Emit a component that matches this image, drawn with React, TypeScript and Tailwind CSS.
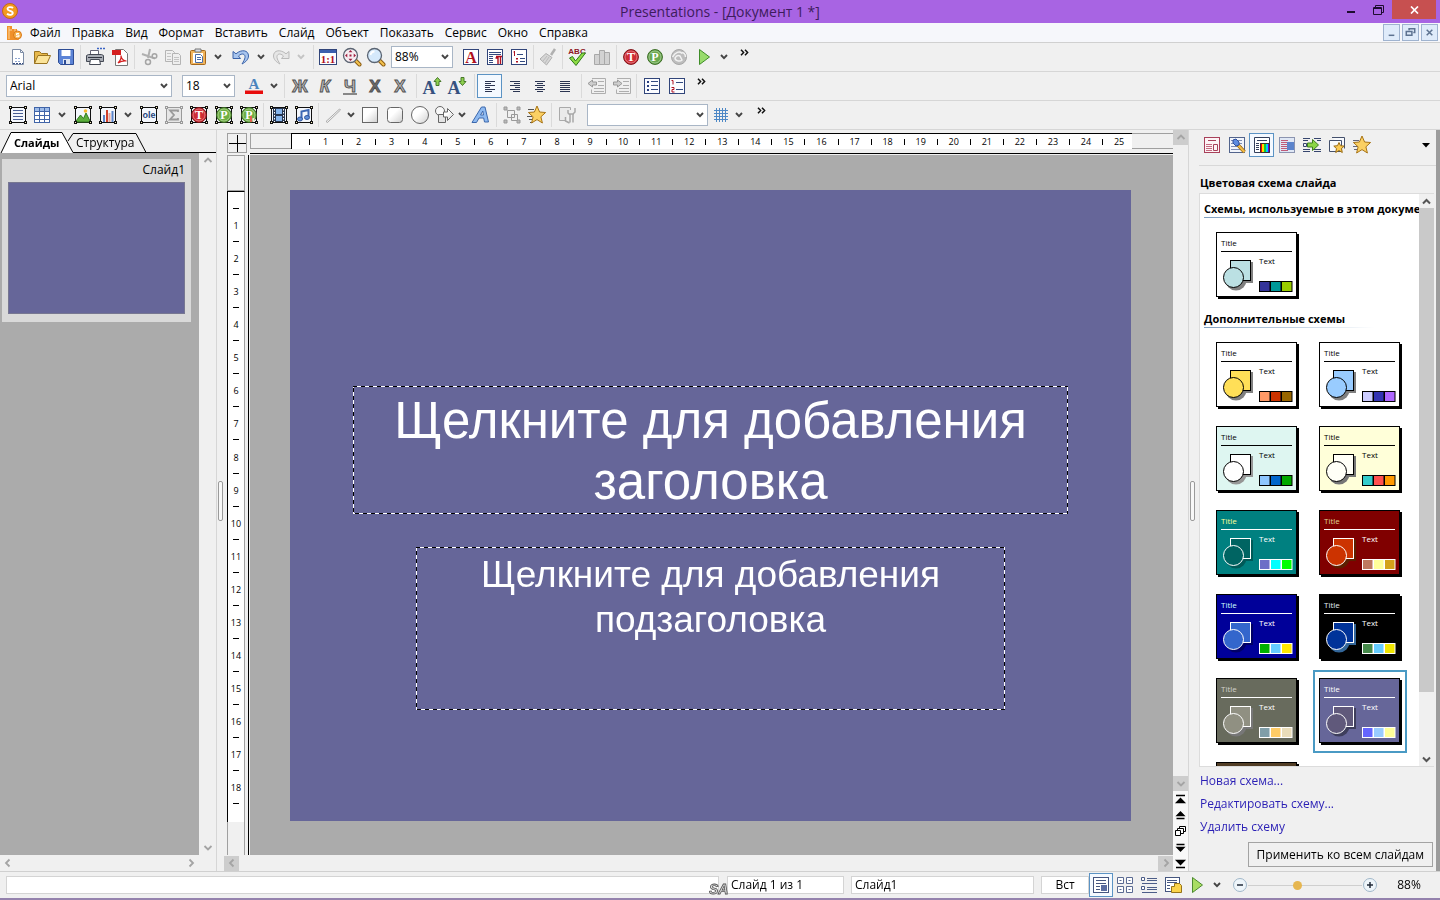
import { useState } from "react";
import type { ReactNode } from "react";
import clsx from "clsx";

interface Scheme {
  name: string;
  bg: string;
  line: string;
  title: string;
  fill: string;
  shadow: string;
  swatches: [string, string, string];
}

const usedScheme: Scheme = {
  name: "used",
  bg: "#ffffff",
  line: "#000000",
  title: "#000000",
  fill: "#bbe0e3",
  shadow: "#808080",
  swatches: ["#333399", "#009999", "#99cc00"],
};

const schemes: Scheme[] = [
  { name: "yellow", bg: "#ffffff", line: "#000000", title: "#000000", fill: "#ffdf57", shadow: "#808080", swatches: ["#ff9966", "#cc3300", "#996600"] },
  { name: "sky", bg: "#ffffff", line: "#000000", title: "#000000", fill: "#99ccff", shadow: "#808080", swatches: ["#ccccff", "#3333b2", "#af67ff"] },
  { name: "mint", bg: "#def6f1", line: "#000000", title: "#000000", fill: "#ffffff", shadow: "#969696", swatches: ["#8dc6ff", "#0066cc", "#00a800"] },
  { name: "cream", bg: "#ffffd9", line: "#000000", title: "#000000", fill: "#fffff7", shadow: "#777777", swatches: ["#33cccc", "#ff5050", "#ff9900"] },
  { name: "teal", bg: "#008080", line: "#ffffff", title: "#ffff99", fill: "#006462", shadow: "#005a58", swatches: ["#6d6fc7", "#00ffff", "#00ff00"] },
  { name: "maroon", bg: "#800000", line: "#ffffff", title: "#dfd293", fill: "#cc3300", shadow: "#5c1f00", swatches: ["#be7960", "#ffff99", "#d3a219"] },
  { name: "navy", bg: "#000099", line: "#ffffff", title: "#ccffff", fill: "#3366cc", shadow: "#000066", swatches: ["#00b000", "#66ccff", "#ffe701"] },
  { name: "black", bg: "#000000", line: "#ffffff", title: "#e3ebf1", fill: "#003399", shadow: "#336699", swatches: ["#468a4b", "#66ccff", "#f0e500"] },
  { name: "olive", bg: "#686b5d", line: "#ffffff", title: "#d1d1cb", fill: "#909082", shadow: "#777777", swatches: ["#809ea8", "#ffcc66", "#e9dcb9"] },
  { name: "violet", bg: "#666699", line: "#ffffff", title: "#ffffff", fill: "#60597b", shadow: "#3e3e5c", swatches: ["#6666ff", "#99ccff", "#ffff99"] },
  { name: "brown", bg: "#523e26", line: "#ffffff", title: "#dfc08d", fill: "#8c7b70", shadow: "#2d2015", swatches: ["#8f5f2f", "#cc9966", "#e0c9a0"] },
];

const menus = ["Файл", "Правка", "Вид", "Формат", "Вставить", "Слайд", "Объект", "Показать", "Сервис", "Окно", "Справка"];

/* ---------- drawing helpers ---------- */

function Ico({ children, size = 20 }: { children: ReactNode; size?: number }) {
  return (
    <svg width={size} height={size} viewBox={`0 0 ${size} ${size}`} fill="none" className="shrink-0" aria-hidden="true">
      {children}
    </svg>
  );
}

function Framed({ children, muted = false }: { children?: ReactNode; muted?: boolean }) {
  const c = muted ? "#9a9a9a" : "#111";
  return (
    <Ico>
      <rect x="2.500" y="2.500" width="15" height="15" fill={muted ? "#e6e6e6" : "#f4f7fc"} stroke={c} />
      {children}
      {[1, 16].map((x) =>
        [1, 16].map((y) => (
          <rect key={`${x}-${y}`} x={x + 0.5} y={y + 0.5} width="2" height="2" fill={muted ? "#eee" : "#fff3c4"} stroke={c} />
        )),
      )}
    </Ico>
  );
}

function Lines({ x = 4, w = 12, ys, color = "#334a80" }: { x?: number; w?: number; ys: number[]; color?: string }) {
  return (
    <>
      {ys.map((y) => (
        <path key={y} d={`M${x} ${y + 0.5}h${w}`} stroke={color} />
      ))}
    </>
  );
}

function Disc({ color, dark, letter }: { color: string; dark: string; letter: string }) {
  return (
    <>
      <circle cx="10" cy="10" r="7.400" fill={color} stroke={dark} />
      <circle cx="10" cy="10" r="6" stroke="#fff" strokeOpacity="0.350" />
      <text x="10" y="14" textAnchor="middle" fontSize="12" fontWeight="700" fill="#fff" fontFamily="Liberation Serif, serif">
        {letter}
      </text>
    </>
  );
}

const starPath = "M10 1l2.600 6 6 .5-4.700 4.300 1.500 6.200-5.400-3.400-5.400 3.400 1.500-6.200L1.400 7.500l6-.5z";

function Chevron({ muted = false }: { muted?: boolean }) {
  return (
    <svg width="8" height="6" viewBox="0 0 8 6" fill="none" className="shrink-0" aria-hidden="true">
      <path d="M1 1l3 3.200L7 1" stroke={muted ? "#c4c4c4" : "#444"} strokeWidth="1.900" />
    </svg>
  );
}

/* ---------- toolbar controls ---------- */

function Tool({ label, children, active = false, wide = false }: { label: string; children: ReactNode; active?: boolean; wide?: boolean }) {
  return (
    <button
      type="button"
      aria-label={label}
      className={clsx(
        "flex h-6 shrink-0 items-center justify-center",
        wide ? "w-[25px]" : "w-6",
        active && "border border-[#5b93c4] bg-[#f4f9ff]",
      )}
    >
      {children}
    </button>
  );
}

function Drop({ label, muted = false, narrow = false }: { label: string; muted?: boolean; narrow?: boolean }) {
  return (
    <button type="button" aria-label={label} className={clsx("flex h-6 shrink-0 items-center justify-center", narrow ? "w-3" : "w-4")}>
      <Chevron muted={muted} />
    </button>
  );
}

function Sep() {
  return <span className="mx-[2px] h-6 w-px shrink-0 bg-[#dadada]" />;
}

function More() {
  return (
    <button type="button" aria-label="Ещё" className="mb-[9px] ml-1 flex w-4 shrink-0 items-center justify-center">
      <svg width="9" height="7" viewBox="0 0 9 7" fill="none" aria-hidden="true">
        <path d="M1 .8l2.600 2.700L1 6.200M5 .8l2.600 2.700L5 6.200" stroke="#111" strokeWidth="1.500" />
      </svg>
    </button>
  );
}

function Combo({ label, options, className }: { label: string; options: string[]; className: string }) {
  return (
    <div className={clsx("relative h-[22px] shrink-0", className)}>
      <select
        aria-label={label}
        className="h-full w-full appearance-none rounded-none border border-[#a9b6c6] bg-white pl-[3px] pr-4 text-xs text-black outline-none"
      >
        {options.map((o) => (
          <option key={o}>{o}</option>
        ))}
      </select>
      <span className="pointer-events-none absolute inset-y-0 right-1 flex items-center">
        <Chevron />
      </span>
    </div>
  );
}

function Bar({ children }: { children: ReactNode }) {
  return <div className="flex h-[29px] shrink-0 items-center border-b border-[#d6d6d6] pl-[6px]">{children}</div>;
}

function FancyLetter({ ch, italic = false, underline = false, fill = "#b5b5b5" }: { ch: string; italic?: boolean; underline?: boolean; fill?: string }) {
  return (
    <Ico>
      <text x="10" y="15.500" textAnchor="middle" fontSize="17" fontWeight="700" fontStyle={italic ? "italic" : "normal"} fill={fill} stroke="#505050" strokeWidth="0.900" fontFamily="Liberation Sans, sans-serif">
        {ch}
      </text>
      {underline && <path d="M3 18h14" stroke="#666" strokeWidth="1.500" />}
    </Ico>
  );
}

function Magnifier({ fit = false }: { fit?: boolean }) {
  return (
    <Ico>
      <path d="M13 13l4.500 4.500" stroke="#8a5a10" strokeWidth="4" strokeLinecap="round" />
      <path d="M13 13l4.500 4.500" stroke="#f2c14e" strokeWidth="2.200" strokeLinecap="round" />
      <circle cx="8.500" cy="8.500" r="7" fill={fit ? "#f7eef2" : "#d5e9fb"} stroke="#5a6472" strokeWidth="1.300" />
      {fit ? (
        <path d="M8.500 3l2 2.300h-4zM8.500 14l2-2.300h-4zM3 8.500l2.300-2v4zM14 8.500l-2.300-2v4zM7.500 7.500h2v2h-2z" fill="#a02040" />
      ) : (
        <path d="M4.500 8c.5-2.500 2-3.500 4-3.500" stroke="#fff" strokeWidth="1.800" />
      )}
    </Ico>
  );
}

function StandardBar() {
  return (
    <Bar>
      <Tool label="Создать">
        <Ico>
          <path d="M4.500 2.500h8l3 3v12h-11z" fill="#fff" stroke="#7d8ca5" />
          <path d="M12.500 2.500v3h3" stroke="#7d8ca5" />
          <path d="M7 14.500h6M7 11.500h6" stroke="#8fa6d0" strokeDasharray="2 1" />
          <path d="M5 16.500h10" stroke="#334a80" strokeDasharray="2 1" />
        </Ico>
      </Tool>
      <Tool label="Открыть">
        <Ico>
          <path d="M2.500 16.500v-12h5l2 2h6v3" fill="#e7b84b" stroke="#9a7421" />
          <path d="M2.500 16.500l3.500-8h12.500l-3.500 8z" fill="#fbe49a" stroke="#9a7421" />
        </Ico>
      </Tool>
      <Tool label="Сохранить">
        <Ico>
          <path d="M2.500 2.500h15v15h-13l-2-2z" fill="#5b83d6" stroke="#2d4c94" />
          <path d="M5.500 3h9v6h-9z" fill="#fff" />
          <path d="M7 12h7v5H7z" fill="#dfe6f2" />
          <path d="M8 13h2v4H8z" fill="#2d4c94" />
        </Ico>
      </Tool>
      <Sep />
      <Tool label="Печать">
        <Ico>
          <path d="M5.500 8V3.500h8V8" fill="#fff" stroke="#667" />
          <path d="M1.500 8.500l2-1h13l2 1v6h-17z" fill="#a9adb5" stroke="#454a55" />
          <path d="M5.500 12.500h9l1 5h-11z" fill="#fff" stroke="#454a55" />
          <path d="M3 10.500h14" stroke="#303540" />
          <path d="M12 1.500h2M15 1.500h2M18 1.500h2" stroke="#3b63c4" strokeWidth="1.500" />
        </Ico>
      </Tool>
      <Tool label="PDF" wide>
        <Ico>
          <path d="M5.500 2.500h8l4 4v12h-12z" fill="#fff" stroke="#777" />
          <path d="M2 3h9v5H2z" fill="#d42020" />
          <path d="M8 16c3-3 3.500-5 3-7.500 0 3 2.500 5.500 5.500 5.500-3-.5-6 .5-8.500 2z" stroke="#d42020" strokeWidth="1.200" />
        </Ico>
      </Tool>
      <Sep />
      <Tool label="Вырезать">
        <Ico>
          <path d="M11 2l-2 9M3 7l13 4.500" stroke="#b0b0b0" strokeWidth="2" />
          <circle cx="9" cy="15" r="2.500" stroke="#a5a5a5" strokeWidth="1.500" />
          <circle cx="15.500" cy="9" r="2.300" stroke="#a5a5a5" strokeWidth="1.500" />
        </Ico>
      </Tool>
      <Tool label="Копировать">
        <Ico>
          <path d="M2.500 3.500h7l2 2v9h-9z" fill="#efefef" stroke="#b4b4b4" />
          <path d="M9.500 6.500h6l2 2v9h-8z" fill="#efefef" stroke="#b4b4b4" />
          <Lines x={4} w={4} ys={[6, 9, 12]} color="#c4c4c4" />
          <Lines x={11} w={5} ys={[10, 12, 14]} color="#c4c4c4" />
        </Ico>
      </Tool>
      <Tool label="Вставить" wide>
        <Ico>
          <rect x="2.500" y="3.500" width="15" height="14" rx="1" fill="#f0b45c" stroke="#a5681c" />
          <path d="M5 6h10v10H5z" fill="#fff" />
          <path d="M7 2h6v3H7z" fill="#d8dde6" stroke="#777" />
          <path d="M7.500 7.500h5l2 2v6h-7z" fill="#fff" stroke="#4a6da8" />
          <Lines x={9} w={4} ys={[10, 12]} color="#4a6da8" />
        </Ico>
      </Tool>
      <Drop label="Варианты вставки" />
      <span className="w-[2px]" />
      <Tool label="Отменить" wide>
        <Ico>
          <path d="M2 4.500v7h7.500L7.500 9C11 5.500 14.500 7 14 10.500c-.3 2-1.500 4-3 6.500 4-2 6.500-5 6.500-8C17.500 3 10.500 2 5 6.800z" fill="#a8c5ee" stroke="#3a62a8" />
        </Ico>
      </Tool>
      <Drop label="Список отмен" />
      <Tool label="Вернуть">
        <Ico>
          <path d="M18 4.500v7h-7.500L12.500 9C9 5.500 5.500 7 6 10.500c.3 2 1.500 4 3 6.500-4-2-6.500-5-6.500-8C2.500 3 9.500 2 15 6.800z" fill="#e6e6e6" stroke="#b9b9b9" />
        </Ico>
      </Tool>
      <Drop label="Список возвратов" muted />
      <span className="w-[2px]" />
      <Sep />
      <Tool label="Масштаб 1:1">
        <Ico>
          <rect x="1.500" y="2.500" width="17" height="15" fill="#fff" stroke="#31457a" />
          <path d="M2 3h16v3H2z" fill="#3c5fae" />
          <text x="10" y="16" textAnchor="middle" fontSize="11" fontWeight="700" fill="#b01020" fontFamily="Liberation Serif, serif">
            1:1
          </text>
        </Ico>
      </Tool>
      <Tool label="По размеру окна">
        <Magnifier fit />
      </Tool>
      <Tool label="Масштаб">
        <Magnifier />
      </Tool>
      <Combo label="Масштаб" options={["88%", "100%", "150%"]} className="ml-[3px] mr-[6px] w-[62px]" />
      <Tool label="Шрифт">
        <Ico>
          <rect x="2.500" y="2.500" width="15" height="15" fill="#fff" stroke="#31457a" />
          <text x="10" y="15.500" textAnchor="middle" fontSize="16" fontWeight="700" fill="#b01020" fontFamily="Liberation Serif, serif">
            A
          </text>
        </Ico>
      </Tool>
      <Tool label="Абзац">
        <Ico>
          <rect x="2.500" y="2.500" width="15" height="15" fill="#fff" stroke="#31457a" />
          <Lines x={4} w={12} ys={[5, 7]} />
          <Lines x={4} w={4} ys={[9, 11, 13, 15]} />
          <path d="M11 9.500h6M13 9v8M15.500 9v8M10.500 11h2.500" stroke="#b01020" strokeWidth="1.400" />
        </Ico>
      </Tool>
      <Tool label="Список">
        <Ico>
          <rect x="2.500" y="2.500" width="15" height="15" fill="#fff" stroke="#31457a" />
          <path d="M5.500 4v5M4.500 5h1" stroke="#b01020" />
          <path d="M8 7.500h6M11 11.500h5M11 14.500h5" stroke="#334a80" />
          <path d="M7 11h2v1.500H7zM7 14h2v1.500H7z" fill="#b01020" />
        </Ico>
      </Tool>
      <Sep />
      <Tool label="Кисть">
        <Ico>
          <path d="M17 2l-4 6" stroke="#b0b0b0" strokeWidth="2.500" />
          <path d="M8 6.500l6 4-5.500 7.500L2 12z" fill="#d6d6d6" stroke="#b0b0b0" />
          <path d="M5 14l4-5M7 16l4-6" stroke="#bbb" />
        </Ico>
      </Tool>
      <Sep />
      <Tool label="Орфография">
        <Ico size={22}>
          <text x="11" y="7.500" textAnchor="middle" fontSize="8" fontWeight="700" fill="#8c1525" fontFamily="Liberation Sans, sans-serif">
            ABC
          </text>
          <path d="M3.500 12l3-1.500 3 4.500 6.500-8h3.500L10 19.500z" fill="#8edb45" stroke="#2d7a18" />
        </Ico>
      </Tool>
      <Tool label="Тезаурус" wide>
        <Ico>
          <path d="M2.500 7.500h5v10h-5zM7.500 3.500h5v14h-5zM12.500 5.500h5v12h-5z" fill="#d2d2d2" stroke="#a8a8a8" />
        </Ico>
      </Tool>
      <Sep />
      <Tool label="TextMaker">
        <Ico>
          <Disc color="#cf2c34" dark="#7c1016" letter="T" />
        </Ico>
      </Tool>
      <Tool label="PlanMaker">
        <Ico>
          <Disc color="#6aa84f" dark="#386a22" letter="P" />
        </Ico>
      </Tool>
      <Tool label="Почта">
        <Ico>
          <circle cx="10" cy="10" r="7.500" fill="#bdbdbd" stroke="#a8a8a8" />
          <path d="M3.500 10c3-5 7-6 9-4 2-1 4 1 4 4M6 11c0 3 5 4 7 2l-2-4c-2-1-4 0-5 2z" stroke="#f2f2f2" strokeWidth="1.500" />
        </Ico>
      </Tool>
      <Tool label="Показ" wide>
        <Ico>
          <path d="M5.500 2.500l10 7.500-10 7.500z" fill="#98dc6c" stroke="#3f8d28" />
        </Ico>
      </Tool>
      <Drop label="Варианты показа" />
      <More />
    </Bar>
  );
}

function Align({ kind }: { kind: "left" | "right" | "center" | "full" }) {
  const d = {
    left: "M5 5.500h10M5 7.500h6M5 9.500h10M5 11.500h5M5 13.500h10M5 15.500h7",
    right: "M5 5.500h10M9 7.500h6M5 9.500h10M10 11.500h5M5 13.500h10M8 15.500h7",
    center: "M5 5.500h10M7 7.500h6M5 9.500h10M7 11.500h6M5 13.500h10M7 15.500h6",
    full: "M5 5.500h10M5 7.500h10M5 9.500h10M5 11.500h10M5 13.500h10M5 15.500h10",
  }[kind];
  return (
    <Ico>
      <path d={d} stroke="#2b3552" />
    </Ico>
  );
}

function FormatBar() {
  return (
    <Bar>
      <Combo label="Гарнитура" options={["Arial", "Tahoma"]} className="mr-[10px] w-[166px]" />
      <Combo label="Кегль" options={["18", "20", "24"]} className="mr-[6px] w-[53px]" />
      <Tool label="Цвет шрифта" wide>
        <Ico>
          <text x="10" y="12.500" textAnchor="middle" fontSize="15" fontWeight="700" fill="#4a83bd" fontFamily="Liberation Serif, serif">
            A
          </text>
          <path d="M1 14.500h18v3.500H1z" fill="#e80d0d" />
        </Ico>
      </Tool>
      <Drop label="Палитра" />
      <Sep />
      <Tool label="Жирный" wide>
        <FancyLetter ch="Ж" />
      </Tool>
      <Tool label="Курсив" wide>
        <FancyLetter ch="К" italic />
      </Tool>
      <Tool label="Подчёркнутый" wide>
        <FancyLetter ch="Ч" underline />
      </Tool>
      <Tool label="Тень" wide>
        <FancyLetter ch="Х" fill="#6d6d6d" />
      </Tool>
      <Tool label="Рельеф" wide>
        <FancyLetter ch="Х" />
      </Tool>
      <span className="w-[2px]" />
      <Sep />
      {["Увеличить шрифт", "Уменьшить шрифт"].map((label, i) => (
        <Tool key={label} label={label} wide>
          <Ico>
            <text x="7" y="17.500" textAnchor="middle" fontSize="18" fontWeight="700" fill="#35517f" fontFamily="Liberation Serif, serif">
              A
            </text>
            <path d={i === 0 ? "M15.500 1.500l3.500 4h-2v4h-3v-4h-2z" : "M15.500 9.500l3.500-4h-2v-4h-3v4h-2z"} fill="#8ed04f" stroke="#47782a" />
          </Ico>
        </Tool>
      ))}
      <span className="w-[3px]" />
      <Sep />
      <Tool label="По левому краю" active wide>
        <Align kind="left" />
      </Tool>
      <Tool label="По правому краю" wide>
        <Align kind="right" />
      </Tool>
      <Tool label="По центру" wide>
        <Align kind="center" />
      </Tool>
      <Tool label="По ширине" wide>
        <Align kind="full" />
      </Tool>
      <span className="w-[2px]" />
      <Sep />
      {["M1 7.500l4.500-3.500v2h4v3h-4v2z", "M10 7.500l-4.500-3.500v2h-4v3h4v2z"].map((d, i) => (
        <Tool key={d} label={i === 0 ? "Уменьшить отступ" : "Увеличить отступ"} wide>
          <Ico>
            <path d="M5 2.500h13.500v15H4.500v-4M11 5.500h6M11 9.500h6M7 12.500h10M7 15.500h10" stroke="#aeaeae" />
            <path d={d} fill="#cfcfcf" stroke="#999" />
          </Ico>
        </Tool>
      ))}
      <Sep />
      <Tool label="Маркированный список" wide>
        <Ico>
          <rect x="2.500" y="2.500" width="15" height="15" fill="#fbfcff" stroke="#31457a" />
          <path d="M5 5h2v2H5zM5 9h2v2H5zM5 13h2v2H5z" fill="#2a3f80" />
          <Lines x={9} w={7} ys={[5, 9, 13]} />
        </Ico>
      </Tool>
      <Tool label="Нумерованный список" wide>
        <Ico>
          <rect x="2.500" y="2.500" width="15" height="15" fill="#fbfcff" stroke="#31457a" />
          <path d="M4.500 4.500h1.500v4M4.500 11.500h2.500v2h-2v2.500H7.500" stroke="#b01020" />
          <Lines x={9} w={7} ys={[6, 13]} />
        </Ico>
      </Tool>
      <More />
    </Bar>
  );
}

function ObjectBar() {
  return (
    <Bar>
      <Tool label="Текстовая рамка">
        <Framed>
          <Lines x={5} w={10} ys={[5, 8, 11, 14]} color="#4a5f95" />
        </Framed>
      </Tool>
      <Tool label="Таблица">
        <Ico>
          <rect x="2.500" y="2.500" width="15" height="15" fill="#fff" stroke="#4064a8" />
          <path d="M3 3h14v3H3z" fill="#9dbbe8" />
          <path d="M2.500 6.500h15M2.500 10.500h15M2.500 14.500h15M7.500 2.500v15M12.500 2.500v15" stroke="#4064a8" />
        </Ico>
      </Tool>
      <Drop label="Варианты таблицы" />
      <Tool label="Рисунок" wide>
        <Framed>
          <path d="M3 16l4.500-6 3 3.500L13 8l4 8v1H3z" fill="#5cae3c" stroke="#2f7a1e" />
          <circle cx="12.500" cy="6" r="1.800" fill="#f6b92f" />
        </Framed>
      </Tool>
      <Tool label="Диаграмма" wide>
        <Framed>
          <path d="M5 10h2v7H5zM13.500 6h2v11h-2z" fill="#5b83c8" />
          <path d="M8 5h2v12H8z" fill="#d0402c" />
          <path d="M10.500 8h2v9h-2z" fill="#e9a49a" />
        </Framed>
      </Tool>
      <Drop label="Варианты диаграммы" />
      <Tool label="OLE" wide>
        <Framed>
          <text x="10" y="13" textAnchor="middle" fontSize="9" fontWeight="700" fill="#27447c" fontFamily="Liberation Sans, sans-serif">
            ole
          </text>
        </Framed>
      </Tool>
      <Tool label="Формула" wide>
        <Framed muted>
          <path d="M14 7V5.500H6l4 4.500-4 4.500h8V13" stroke="#9a9a9a" strokeWidth="1.800" />
        </Framed>
      </Tool>
      <Tool label="Объект TextMaker" wide>
        <Framed>
          <Disc color="#cf2c34" dark="#7c1016" letter="T" />
        </Framed>
      </Tool>
      <Tool label="Объект PlanMaker" wide>
        <Framed>
          <Disc color="#6fb043" dark="#386a22" letter="P" />
        </Framed>
      </Tool>
      <Tool label="Диаграмма PlanMaker" wide>
        <Framed>
          <Disc color="#6fb043" dark="#386a22" letter="P" />
          <path d="M11 11h2v6h-2z" fill="#e06050" />
          <path d="M13.500 13h2v4h-2z" fill="#f3e6d8" />
        </Framed>
      </Tool>
      <Sep />
      <Tool label="Видео" wide>
        <Framed>
          <path d="M4 3h12v14H4z" fill="#28364f" />
          <path d="M7 4h6v5H7zM7 11h6v5H7z" fill="#86b4ea" />
          <path d="M5.500 4v13M14.500 4v13" stroke="#fff" strokeDasharray="1.500 1.500" />
        </Framed>
      </Tool>
      <Tool label="Звук" wide>
        <Framed>
          <path d="M7.500 14V6.500l7-1.500v7" stroke="#3d68b4" strokeWidth="2" />
          <ellipse cx="6" cy="14" rx="2.500" ry="2" fill="#5f8fd8" stroke="#2f549c" />
          <ellipse cx="13" cy="12.500" rx="2.500" ry="2" fill="#5f8fd8" stroke="#2f549c" />
        </Framed>
      </Tool>
      <Sep />
      <Tool label="Линия">
        <Ico>
          <path d="M3 16.500L16.500 4l1 1L4.500 17.500z" fill="#eee" stroke="#999" strokeWidth="0.800" />
        </Ico>
      </Tool>
      <Drop label="Варианты линии" narrow />
      <svg width="0" height="0" className="absolute" aria-hidden="true">
        <linearGradient id="shapeFill" x1="0" y1="0" x2="1" y2="1">
          <stop offset="0.400" stopColor="#fff" />
          <stop offset="1" stopColor="#cfcfcf" />
        </linearGradient>
      </svg>
      <Tool label="Прямоугольник" wide>
        <Ico>
          <rect x="2.500" y="2.500" width="15" height="15" fill="url(#shapeFill)" stroke="#666" />
        </Ico>
      </Tool>
      <Tool label="Скруглённый прямоугольник" wide>
        <Ico>
          <rect x="2.500" y="2.500" width="15" height="15" rx="3" fill="url(#shapeFill)" stroke="#666" />
        </Ico>
      </Tool>
      <Tool label="Эллипс" wide>
        <Ico>
          <circle cx="10" cy="10" r="8.500" fill="url(#shapeFill)" stroke="#666" />
        </Ico>
      </Tool>
      <Tool label="Автофигуры">
        <Ico>
          <circle cx="6" cy="6" r="4.500" fill="#f8f8f8" stroke="#666" />
          <path d="M4.500 9.500h7v8h-7z" fill="#e4e4e4" stroke="#666" />
          <path d="M9.500 7h4V3.500l6 6-6 6V12h-4z" fill="url(#shapeFill)" stroke="#666" />
        </Ico>
      </Tool>
      <Drop label="Варианты автофигур" narrow />
      <Tool label="TextArt">
        <Ico>
          <path d="M2 17.500L11.500 2h3.500l3.500 15h-4l-.8-4H9l-2.500 4.500zM10.500 10h3L12.800 6z" fill="#8fbaf0" stroke="#3c68ad" fillRule="evenodd" />
        </Ico>
      </Tool>
      <span className="w-[2px]" />
      <Sep />
      <Tool label="Группа" wide>
        <Ico>
          <path d="M5.500 5.500h7v7h-7zM9.500 9.500h6v6h-6z" stroke="#999" />
          <path d="M2 2h3v3H2zM15 2h3v3h-3zM2 15h3v3H2zM15 15h3v3h-3z" fill="#bbb" stroke="#999" />
        </Ico>
      </Tool>
      <Tool label="Анимация" wide>
        <Ico>
          <path d="M1 4.500h6M0 11.500h5M2 14.500h4M3 17.500h3" stroke="#555" />
          <path d={starPath} fill="#fbd063" stroke="#a87416" />
        </Ico>
      </Tool>
      <Sep />
      <Tool label="Свойства объекта" wide>
        <Ico>
          <path d="M8 15.500H2.500v-13h11V5" stroke="#aaa" fill="#eaeaea" />
          <path d="M8.500 12v4l4 2M11 5v3l2 2v7.500M18 3v4l-2 2v8.500M12 9h5" stroke="#a8a8a8" strokeWidth="1.500" />
        </Ico>
      </Tool>
      <Combo label="Имя объекта" options={[""]} className="ml-[8px] w-[121px]" />
      <Tool label="Сетка" wide>
        <Ico>
          <path d="M3 5.500h14M3 8.500h14M3 11.500h14M3 14.500h14M5.500 3v14M8.500 3v14M11.500 3v14M14.500 3v14" stroke="#4d88c6" />
        </Ico>
      </Tool>
      <Drop label="Варианты сетки" narrow />
      <span className="w-1" />
      <More />
    </Bar>
  );
}

/* ---------- left panel ---------- */

function ArrowButton({ dir, dark = false, label }: { dir: "up" | "down" | "left" | "right"; dark?: boolean; label: string }) {
  const d = { up: "M1.500 6L5 2.500 8.500 6", down: "M1.500 3L5 6.500 8.500 3", left: "M6.500 1.500L3 5l3.500 3.500", right: "M3.500 1.500L7 5 3.500 8.500" }[dir];
  return (
    <button type="button" aria-label={label} className={clsx("flex size-[15px] shrink-0 items-center justify-center", dark && "bg-[#cdcdcd]")}>
      <svg width="10" height="10" viewBox="0 0 10 10" fill="none" aria-hidden="true">
        <path d={d} stroke="#a4a4a4" strokeWidth="1.800" />
      </svg>
    </button>
  );
}

function SlidesPanel() {
  return (
    <aside className="flex w-[217px] shrink-0 flex-col border-r border-[#d6d6d6]">
      <div className="relative flex h-[23px] shrink-0 items-center pt-[3px]">
        <svg className="absolute inset-0 h-full w-full" aria-hidden="true">
          <path d="M68 11l5-7.500h63l10 19H230" fill="#f0f0f0" stroke="#000" />
          <path d="M1 23L11 2.500h51l11 20z" fill="#fff" />
          <path d="M1 23L11 2.500h51l11 20h160" fill="none" stroke="#000" />
        </svg>
        <button type="button" className="relative ml-[14px] w-[46px] whitespace-nowrap text-left text-[11px] font-bold">
          Слайды
        </button>
        <button type="button" className="relative ml-4">
          Структура
        </button>
      </div>
      <div className="flex min-h-0 flex-1">
        <div className="flex-1 bg-[#ababab] pl-[2px] pr-2 pt-[6px]">
          <div className="flex flex-col items-end bg-[#d9d9d9] px-[6px] pb-2 pt-[2px]">
            <span className="mb-[3px] leading-[18px]">Слайд1</span>
            <div className="h-[132px] w-full border border-[#777791] bg-[#666699]" />
          </div>
        </div>
        <div className="flex w-[17px] flex-col items-center justify-between bg-[#f0f0f0]">
          <ArrowButton dir="up" label="Вверх" />
          <ArrowButton dir="down" label="Вниз" />
        </div>
      </div>
      <div className="flex h-4 shrink-0 items-center justify-between pr-[18px]">
        <ArrowButton dir="left" label="Влево" />
        <ArrowButton dir="right" label="Вправо" />
      </div>
    </aside>
  );
}

function Grip() {
  return <span className="h-10 w-[5px] rounded-[2px] border border-[#9a9a9a] bg-[#f8f8f8]" />;
}

/* ---------- workspace ---------- */

const PAGE_W_CM = 25.4;
const PAGE_H_CM = 19.05;

function HorizontalRuler() {
  const cell = 100 / PAGE_W_CM;
  return (
    <div className="ml-[3px] flex h-[22px] min-w-0 flex-1 flex-col border-b border-black pt-px">
      <div className="flex h-[16px]">
        <div className="flex-1 border border-r-0 border-[#a0a0a0] bg-[#f0f0f0]" />
        <div className="flex w-[841px] shrink-0 items-center border-l border-t border-black bg-white">
          <span className="shrink-0" style={{ width: `${cell / 2}%` }} />
          {Array.from({ length: 25 }, (_, i) => (
            <span key={i} className="flex shrink-0 items-center" style={{ width: `${cell}%` }}>
              <span className="h-[6px] w-px bg-black" />
              <span className="flex-1 text-center text-[9px] leading-3">{i + 1}</span>
            </span>
          ))}
        </div>
        <div className="flex-[1_1_1px] border-y border-[#a0a0a0] bg-[#f0f0f0]" />
      </div>
    </div>
  );
}

function VerticalRuler() {
  const cell = 100 / PAGE_H_CM;
  return (
    <div className="flex w-[18px] shrink-0 flex-col">
      <div className="flex-1 border border-[#a0a0a0] bg-[#f0f0f0]" />
      <div className="flex h-[631px] shrink-0 flex-col border-x border-t border-black border-r-[#a0a0a0] bg-white">
        <span className="shrink-0" style={{ height: `${cell / 2}%` }} />
        {Array.from({ length: 18 }, (_, i) => (
          <span key={i} className="flex shrink-0 flex-col items-center" style={{ height: `${cell}%` }}>
            <span className="h-px w-[6px] shrink-0 bg-black" />
            <span className="flex flex-1 items-center pt-[2px] text-[9px] leading-3">{i + 1}</span>
          </span>
        ))}
        <span className="mx-auto h-px w-[6px] bg-black" />
      </div>
      <div className="flex-1 border-x border-[#a0a0a0] bg-[#f0f0f0]" />
    </div>
  );
}

function Placeholder({ children, className }: { children: ReactNode; className: string }) {
  return (
    <div className={clsx("relative text-center text-white", className)}>
      <svg className="absolute left-0 top-0 h-full w-full" fill="none" shapeRendering="crispEdges" aria-hidden="true">
        <rect width="100%" height="100%" stroke="#fff" strokeWidth="2" />
        <rect width="100%" height="100%" stroke="#000" strokeWidth="2" strokeDasharray="4 4" />
      </svg>
      {children}
    </div>
  );
}

function Workspace() {
  return (
    <section className="flex min-w-0 flex-1 flex-col">
      <div className="flex shrink-0 pb-px pl-[3px] pt-[2px]">
        <button type="button" aria-label="Начало координат" className="mt-px flex size-5 shrink-0 items-center justify-center border border-[#a0a0a0]">
          <svg width="17" height="17" viewBox="0 0 17 17" aria-hidden="true">
            <path d="M0 8.500h17M8.500 0v17" stroke="#000" />
          </svg>
        </button>
        <HorizontalRuler />
      </div>
      <div className="flex min-h-0 flex-1 pl-[3px]">
        <VerticalRuler />
        <div className="ml-[3px] mr-px w-px shrink-0 bg-black" />
        <div className="flex min-w-0 flex-1 items-center justify-center bg-[#ababab] pr-[2px]">
          <div className="flex h-[631px] w-[841px] shrink-0 flex-col items-center gap-[33px] bg-[#666699] pt-[196px] font-['Liberation_Sans',Arial,sans-serif]">
            <Placeholder className="h-[128px] w-[715px] px-8 pt-1 text-[51px] leading-[61px]">Щелкните для добавления заголовка</Placeholder>
            <Placeholder className="h-[163px] w-[589px] px-12 pt-[5px] text-[37px] leading-[45px]">Щелкните для добавления подзаголовка</Placeholder>
          </div>
        </div>
      </div>
      <div className="flex h-4 shrink-0 items-center justify-between">
        <ArrowButton dir="left" label="Влево" dark />
        <ArrowButton dir="right" label="Вправо" dark />
      </div>
    </section>
  );
}

const pageNav = [
  { label: "Первый слайд", d: "M2 1.500h9M6.500 4.500L10.500 8.500h-8z" },
  { label: "Предыдущий слайд", d: "M6.500 2L10 5.500H3zM2.500 8.500h8" },
  { label: "Следующий слайд", d: "M2.500 2.500h8M6.500 9L3 5.500h7z" },
  { label: "Последний слайд", d: "M6.500 6.500L2.500 2.500h8zM2 9.500h9" },
];

function NavButton({ label, d }: { label: string; d: string }) {
  return (
    <button type="button" aria-label={label} className="flex h-4 w-[15px] items-center justify-center">
      <svg width="13" height="11" viewBox="0 0 13 11" aria-hidden="true">
        <path d={d} fill="#000" stroke="#000" strokeWidth="1.300" />
      </svg>
    </button>
  );
}

function SlideScroll() {
  return (
    <div className="flex w-[15px] shrink-0 flex-col">
      <ArrowButton dir="up" label="Вверх" dark />
      <div className="flex-1" />
      <ArrowButton dir="down" label="Вниз" dark />
      <div className="flex flex-col bg-[#f8f8f8]">
        {pageNav.slice(0, 2).map((n) => (
          <NavButton key={n.label} {...n} />
        ))}
        <button type="button" aria-label="Выбор объекта" className="flex h-4 w-[15px] items-center justify-center">
          <svg width="13" height="12" viewBox="0 0 13 12" fill="#fff" stroke="#000" aria-hidden="true">
            <path d="M5.500 1.500h6v5h-6z" />
            <path d="M3.500 3.500h6v5h-6z" />
            <path d="M1.500 5.500h5v5h-5z" />
          </svg>
        </button>
        {pageNav.slice(2).map((n) => (
          <NavButton key={n.label} {...n} />
        ))}
      </div>
    </div>
  );
}

/* ---------- scheme panel ---------- */

function SchemeCard({ scheme, selected, onSelect }: { scheme: Scheme; selected: boolean; onSelect: () => void }) {
  const { bg, line, title, fill, shadow, swatches } = scheme;
  return (
    <button
      type="button"
      aria-pressed={selected}
      onClick={onSelect}
      className={clsx("flex h-[83px] w-[94px] items-center justify-center border-2", selected ? "border-[#4a9ac4]" : "border-transparent")}
    >
      <svg width="83" height="67" viewBox="0 0 83 67" fontSize="8" fontFamily="Open Sans, sans-serif">
        <path d="M2 2h81v65H2z" fill="#000" />
        <rect x="0.500" y="0.500" width="80" height="64" fill={bg} stroke="#000" />
        <text x="5" y="14" fill={title}>
          Title
        </text>
        <path d="M5 19.500h71" stroke={line} />
        <path d="M16 30h21v21H16z" fill={shadow} />
        <circle cx="20" cy="48" r="10.500" fill={shadow} />
        <rect x="14.500" y="28.500" width="20" height="20" fill={fill} stroke={line} />
        <circle cx="17.500" cy="45.500" r="10" fill={fill} stroke={line} />
        <text x="43" y="32" fill={line}>
          Text
        </text>
        {swatches.map((c, i) => (
          <rect key={i} x={43.5 + i * 11} y="49.500" width="10.500" height="10" fill={c} stroke={line} />
        ))}
      </svg>
    </button>
  );
}

function GroupHeading({ children }: { children: ReactNode }) {
  return (
    <div className="pl-1">
      <h3 className="whitespace-nowrap text-[11px] leading-4 font-bold">{children}</h3>
      <div className="mb-[6px] h-px w-[170px] bg-gradient-to-r from-[#7f9fc0] to-white" />
    </div>
  );
}

function SchemePanel() {
  const [current, setCurrent] = useState("violet");
  return (
    <aside className="flex w-[237px] shrink-0 flex-col">
      <div className="flex h-9 shrink-0 items-center border-b border-[#d8d8d8] pb-[5px]">
        <Tool label="Макет" wide>
          <Ico>
            <rect x="2.500" y="2.500" width="15" height="15" fill="#fdf3f5" stroke="#a8405a" />
            <Lines x={6} w={8} ys={[5]} color="#a8405a" />
            <Lines x={4} w={6} ys={[9, 11, 13, 15]} color="#c46a80" />
            <path d="M11.500 9.500h4v6h-4z" stroke="#a8405a" />
          </Ico>
        </Tool>
        <Tool label="Дизайн" wide>
          <Ico>
            <rect x="2.500" y="2.500" width="15" height="15" fill="#f2f5fb" stroke="#52648c" />
            <Lines x={4} w={11} ys={[5, 8, 11, 14]} color="#7d8db4" />
            <path d="M11 10l6.500 7" stroke="#9a6a18" strokeWidth="3.500" />
            <path d="M11 10l6.500 7" stroke="#f4bd45" strokeWidth="2" />
            <path d="M6 5l3-1 3 3v3l-3 1-3-3z" fill="#5d8be0" stroke="#2e4f9c" />
          </Ico>
        </Tool>
        <Tool label="Цветовая схема" active wide>
          <Ico>
            <path d="M2.500 2.500h15v15h-15z" fill="#fff" stroke="#333f5c" />
            <Lines x={5} w={10} ys={[5]} color="#333f5c" />
            <Lines x={4} w={3} ys={[8, 10, 12, 14]} color="#333f5c" />
            <path d="M8 8h2.500v10H8z" fill="#f00" />
            <path d="M10 8h2v10h-2z" fill="#fd0" />
            <path d="M12 8h2v10h-2z" fill="#1c3" />
            <path d="M14 8h2v10h-2z" fill="#0cf" />
            <path d="M16 8h2v10h-2z" fill="#60d" />
            <path d="M8.500 8.500h9v9h-9z" stroke="#333" />
          </Ico>
        </Tool>
        <Tool label="Фон" wide>
          <Ico>
            <rect x="2.500" y="2.500" width="15" height="15" fill="#dfe7f5" stroke="#8b94b0" />
            <Lines x={4} w={7} ys={[5, 7, 9, 11, 13, 15]} color="#c05a78" />
            <path d="M10 7h7v8h-7z" fill="#5b83cc" />
          </Ico>
        </Tool>
        <Tool label="Смена слайдов" wide>
          <Ico>
            <path d="M1 3.500h7M12 3.500h7M1 5.500h5M15 5.500h4M1 14.500h7M12 14.500h7M1 16.500h7M12 16.500h7M1.500 8.500h3v3h-3z" stroke="#36456e" />
            <path d="M5.500 8h5V4.500l6 5.500-6 5.500V12h-5z" fill="#8bd646" stroke="#3d7f1f" />
          </Ico>
        </Tool>
        <Tool label="Схемы анимации" wide>
          <Ico>
            <path d="M5 2.500h12.500v11M2.500 5.500h12v11h-12z" fill="#f8fafd" stroke="#44506c" />
            <path d="M12 7.500l1.500 3.200 3.700.4-2.700 2.500.8 3.900-3.300-2-3.300 2 .8-3.900-2.700-2.500 3.700-.4z" fill="#fbcb55" stroke="#9a6c14" />
          </Ico>
        </Tool>
        <Tool label="Анимация объектов" wide>
          <Ico>
            <path d="M1 5.500h6M1 11.500h5M2 14.500h4" stroke="#667" />
            <path d={starPath} fill="#fbd063" stroke="#a87416" />
          </Ico>
        </Tool>
        <button type="button" aria-label="Меню панели" className="ml-auto mr-1 flex h-6 w-3 items-center justify-center">
          <svg width="8" height="5" viewBox="0 0 8 5" aria-hidden="true">
            <path d="M0 0h8L4 4.500z" fill="#000" />
          </svg>
        </button>
      </div>
      <h2 className="shrink-0 pb-[2px] pl-px pt-[9px] text-[11px] leading-4 font-bold">Цветовая схема слайда</h2>
      <div className="mr-[2px] flex min-h-0 flex-1 border border-r-0 border-[#dcdcdc]">
        <div className="min-w-0 flex-1 overflow-x-hidden overflow-y-auto bg-white pt-[7px] [scrollbar-width:none]">
          <GroupHeading>Схемы, используемые в этом документе</GroupHeading>
          <div className="pl-[10px]">
            <SchemeCard scheme={usedScheme} selected={current === "used"} onSelect={() => setCurrent("used")} />
          </div>
          <div className="h-1" />
          <GroupHeading>Дополнительные схемы</GroupHeading>
          <div className="grid w-fit grid-cols-2 gap-x-[9px] gap-y-px pl-[10px]">
            {schemes.map((s) => (
              <SchemeCard key={s.name} scheme={s} selected={current === s.name} onSelect={() => setCurrent(s.name)} />
            ))}
          </div>
        </div>
        <div className="flex w-[15px] shrink-0 flex-col items-center">
          <button type="button" aria-label="Вверх" className="flex size-[14px] items-center justify-center">
            <svg width="9" height="7" viewBox="0 0 9 7" fill="none" aria-hidden="true">
              <path d="M1 5.500L4.500 2 8 5.500" stroke="#555" strokeWidth="2" />
            </svg>
          </button>
          <div className="w-full flex-[8] bg-[#c9c9c9]" />
          <div className="flex-1" />
          <button type="button" aria-label="Вниз" className="flex size-[14px] items-center justify-center">
            <svg width="9" height="7" viewBox="0 0 9 7" fill="none" aria-hidden="true">
              <path d="M1 1.500L4.500 5 8 1.500" stroke="#555" strokeWidth="2" />
            </svg>
          </button>
        </div>
      </div>
      <nav className="flex shrink-0 flex-col items-start gap-[7px] pl-px pt-[6px] text-[#2a1fb5]">
        <a href="#new" className="leading-4">Новая схема...</a>
        <a href="#edit" className="leading-4">Редактировать схему...</a>
        <a href="#delete" className="leading-4">Удалить схему</a>
      </nav>
      <button type="button" className="mb-1 mr-[3px] mt-[7px] h-[25px] shrink-0 self-end whitespace-nowrap border border-[#a3a3a3] bg-[#f0f0f0] px-2">
        Применить ко всем слайдам
      </button>
    </aside>
  );
}

/* ---------- status bar ---------- */

function StatusField({ children, className }: { children?: ReactNode; className: string }) {
  return <div className={clsx("flex h-[18px] items-center whitespace-nowrap border border-[#d4d4d4] bg-white", className)}>{children}</div>;
}

function StatusBar() {
  return (
    <footer className="flex h-[27px] shrink-0 items-center border-t border-[#d0d0d0] pl-[6px]">
      <StatusField className="flex-1" />
      <svg width="22" height="14" viewBox="0 0 22 14" className="relative -mb-[6px] -ml-[10px] shrink-0" aria-hidden="true">
        <text x="0" y="12.500" fontSize="14" fontWeight="700" fontStyle="italic" fill="#ddd" stroke="#555" strokeWidth="0.800" fontFamily="Liberation Sans, sans-serif">
          SA
        </text>
      </svg>
      <StatusField className="-ml-1 mr-[7px] w-[117px] pl-[3px]">Слайд 1 из 1</StatusField>
      <StatusField className="mr-[7px] w-[183px] pl-[3px]">Слайд1</StatusField>
      <StatusField className="w-12 justify-center">Вст</StatusField>
      <Tool label="Обычный" active>
        <Ico>
          <rect x="2.500" y="2.500" width="15" height="15" fill="#fff" stroke="#44557f" />
          <Lines x={5} w={10} ys={[5, 8]} color="#44557f" />
          <Lines x={5} w={4} ys={[11, 14]} color="#44557f" />
          <path d="M10 10h6v6h-6z" fill="#5b6da0" />
        </Ico>
      </Tool>
      <Tool label="Сортировщик">
        <Ico>
          <path d="M2.500 2.500h6v6h-6zM11.500 2.500h6v6h-6zM2.500 11.500h6v6h-6zM11.500 11.500h6v6h-6zM4.500 5.500h2M13.500 5.500h2M4.500 14.500h2M13.500 14.500h2" fill="#fff" stroke="#5a6a92" />
        </Ico>
      </Tool>
      <Tool label="Структура">
        <Ico>
          <path d="M2.500 2.500h3v3h-3zM2.500 11.500h3v3h-3z" fill="#fff" stroke="#4c5d88" />
          <path d="M8 3.500h10M8 5.500h10M3 8.500h15M8 12.500h10M8 14.500h10M3 17.500h15" stroke="#4c5d88" />
        </Ico>
      </Tool>
      <Tool label="Заметки">
        <Ico>
          <rect x="2.500" y="2.500" width="14" height="14" fill="#fff" stroke="#44557f" />
          <Lines x={4} w={10} ys={[5, 7]} color="#44557f" />
          <Lines x={4} w={3} ys={[10, 13]} color="#44557f" />
          <path d="M8.500 11.500h3v-3h5l2 2v7h-10z" fill="#fbd34a" stroke="#96741a" />
        </Ico>
      </Tool>
      <Tool label="Показ">
        <Ico>
          <path d="M5.500 2.500l10 7.500-10 7.500z" fill="#a9dd63" stroke="#4c8a30" />
        </Ico>
      </Tool>
      <Drop label="Варианты показа" />
      {[
        { label: "Уменьшить", d: "M5 8h6" },
        { label: "Увеличить", d: "M5 8h6M8 5v6" },
      ].map((z, i) => (
        <span key={z.label} className={clsx("flex items-center", i === 0 && "ml-[7px]")}>
          {i === 1 && (
            <input
              type="range"
              aria-label="Масштаб"
              min={10}
              max={190}
              defaultValue={88}
              className="h-4 w-[114px] appearance-none bg-transparent [&::-webkit-slider-runnable-track]:h-px [&::-webkit-slider-runnable-track]:bg-[#cfcfcf] [&::-webkit-slider-thumb]:-mt-[4px] [&::-webkit-slider-thumb]:size-[9px] [&::-webkit-slider-thumb]:appearance-none [&::-webkit-slider-thumb]:rounded-full [&::-webkit-slider-thumb]:bg-[#e6b650]"
            />
          )}
          <button type="button" aria-label={z.label} className="size-4">
            <svg width="16" height="16" viewBox="0 0 16 16" aria-hidden="true">
              <circle cx="8" cy="8" r="6.500" fill="#eef5fa" stroke="#9fb6c8" />
              <path d={z.d} stroke="#222b3a" strokeWidth="1.500" />
            </svg>
          </button>
        </span>
      ))}
      <span className="w-[62px] text-center">88%</span>
    </footer>
  );
}

/* ---------- window ---------- */

function TitleBar() {
  return (
    <header className="relative flex h-[23px] shrink-0 items-start justify-center bg-[#a864e3]">
      <svg width="16" height="16" viewBox="0 0 16 16" className="absolute left-[2px] top-[3px]" aria-hidden="true">
        <circle cx="8" cy="8" r="7.500" fill="#f39a1f" stroke="#c2691a" />
        <path d="M11 5C9.500 3.500 5.500 3.800 5.500 6c0 2.300 5.300 1.500 5.300 4 0 2.200-4 2.300-5.800.8" fill="none" stroke="#fff" strokeWidth="1.800" />
      </svg>
      <h1 className="text-sm leading-[23px] text-[#3d1c5c]">Presentations - [Документ 1 *]</h1>
      <div className="absolute right-1 top-0 flex text-[#1e0c30]">
        <button type="button" aria-label="Свернуть" className="flex h-[19px] w-[26px] items-end justify-center pb-[6px]">
          <span className="h-[2px] w-2 bg-current" />
        </button>
        <button type="button" aria-label="Восстановить" className="flex h-[19px] w-[28px] items-center justify-center">
          <svg width="11" height="10" viewBox="0 0 11 10" fill="none" stroke="currentColor" aria-hidden="true">
            <path d="M2.500 2V.5h8v7H9M.5 2.500h8v7h-8zM.5 3.500h8" />
          </svg>
        </button>
        <button type="button" aria-label="Закрыть" className="flex h-[19px] w-11 items-center justify-center bg-[#c75050]">
          <svg width="9" height="8" viewBox="0 0 9 8" aria-hidden="true">
            <path d="M1 .5l7 7M8 .5l-7 7" stroke="#fff" strokeWidth="1.700" />
          </svg>
        </button>
      </div>
    </header>
  );
}

const mdiIcons = [
  { label: "Свернуть документ", d: "M5 10.500h6" },
  { label: "Восстановить документ", d: "M6.500 5V3.500h6v4H11M3.500 6.500h6v4h-6z" },
  { label: "Закрыть документ", d: "M5 4.500l6 6M11 4.500l-6 6" },
];

function MenuBar() {
  return (
    <div className="flex h-5 shrink-0 items-center border-b border-[#d0d0d0] bg-[#f6f7fb] pl-[6px]">
      <svg width="16" height="16" viewBox="0 0 16 16" className="mr-2 shrink-0" aria-hidden="true">
        <path d="M1 1h5v3h5v4l2 7H1z" fill="#f0912a" />
        <path d="M3 2v12M6 5H3M9 4v9" stroke="#fbd49a" />
        <circle cx="11.500" cy="10" r="4" fill="#f7b14a" stroke="#d9781a" />
        <path d="M13 8.500h-2.500v1.500H13v1.700h-3" fill="none" stroke="#fff" />
      </svg>
      <nav className="flex gap-[11px]">
        {menus.map((m) => (
          <button key={m} type="button">
            {m}
          </button>
        ))}
      </nav>
      <div className="ml-auto mr-[2px] flex gap-[2px]">
        {mdiIcons.map((b) => (
          <button key={b.label} type="button" aria-label={b.label} className="flex size-[17px] items-center justify-center border border-[#9fb3cf] bg-[#dfebfa]">
            <svg width="15" height="15" viewBox="0 0 16 15" fill="none" aria-hidden="true">
              <path d={b.d} stroke="#5d7290" strokeWidth="1.600" />
            </svg>
          </button>
        ))}
      </div>
    </div>
  );
}

export default function App() {
  return (
    <div className="flex h-screen flex-col overflow-hidden bg-[#f0f0f0] font-['Open_Sans','Noto_Sans',sans-serif] text-xs text-black">
      <TitleBar />
      <MenuBar />
      <StandardBar />
      <FormatBar />
      <ObjectBar />
      <main className="flex min-h-0 flex-1">
        <SlidesPanel />
        <div className="flex w-[7px] shrink-0 items-center justify-center">
          <Grip />
        </div>
        <Workspace />
        <SlideScroll />
        <div className="flex w-[11px] shrink-0 items-center justify-start border-l border-[#d6d6d6] pl-px">
          <Grip />
        </div>
        <SchemePanel />
        <div className="w-1 shrink-0 bg-[#9c9c9c]" />
      </main>
      <StatusBar />
      <div className="flex h-[2px] shrink-0 bg-[#9482ad]" />
    </div>
  );
}
